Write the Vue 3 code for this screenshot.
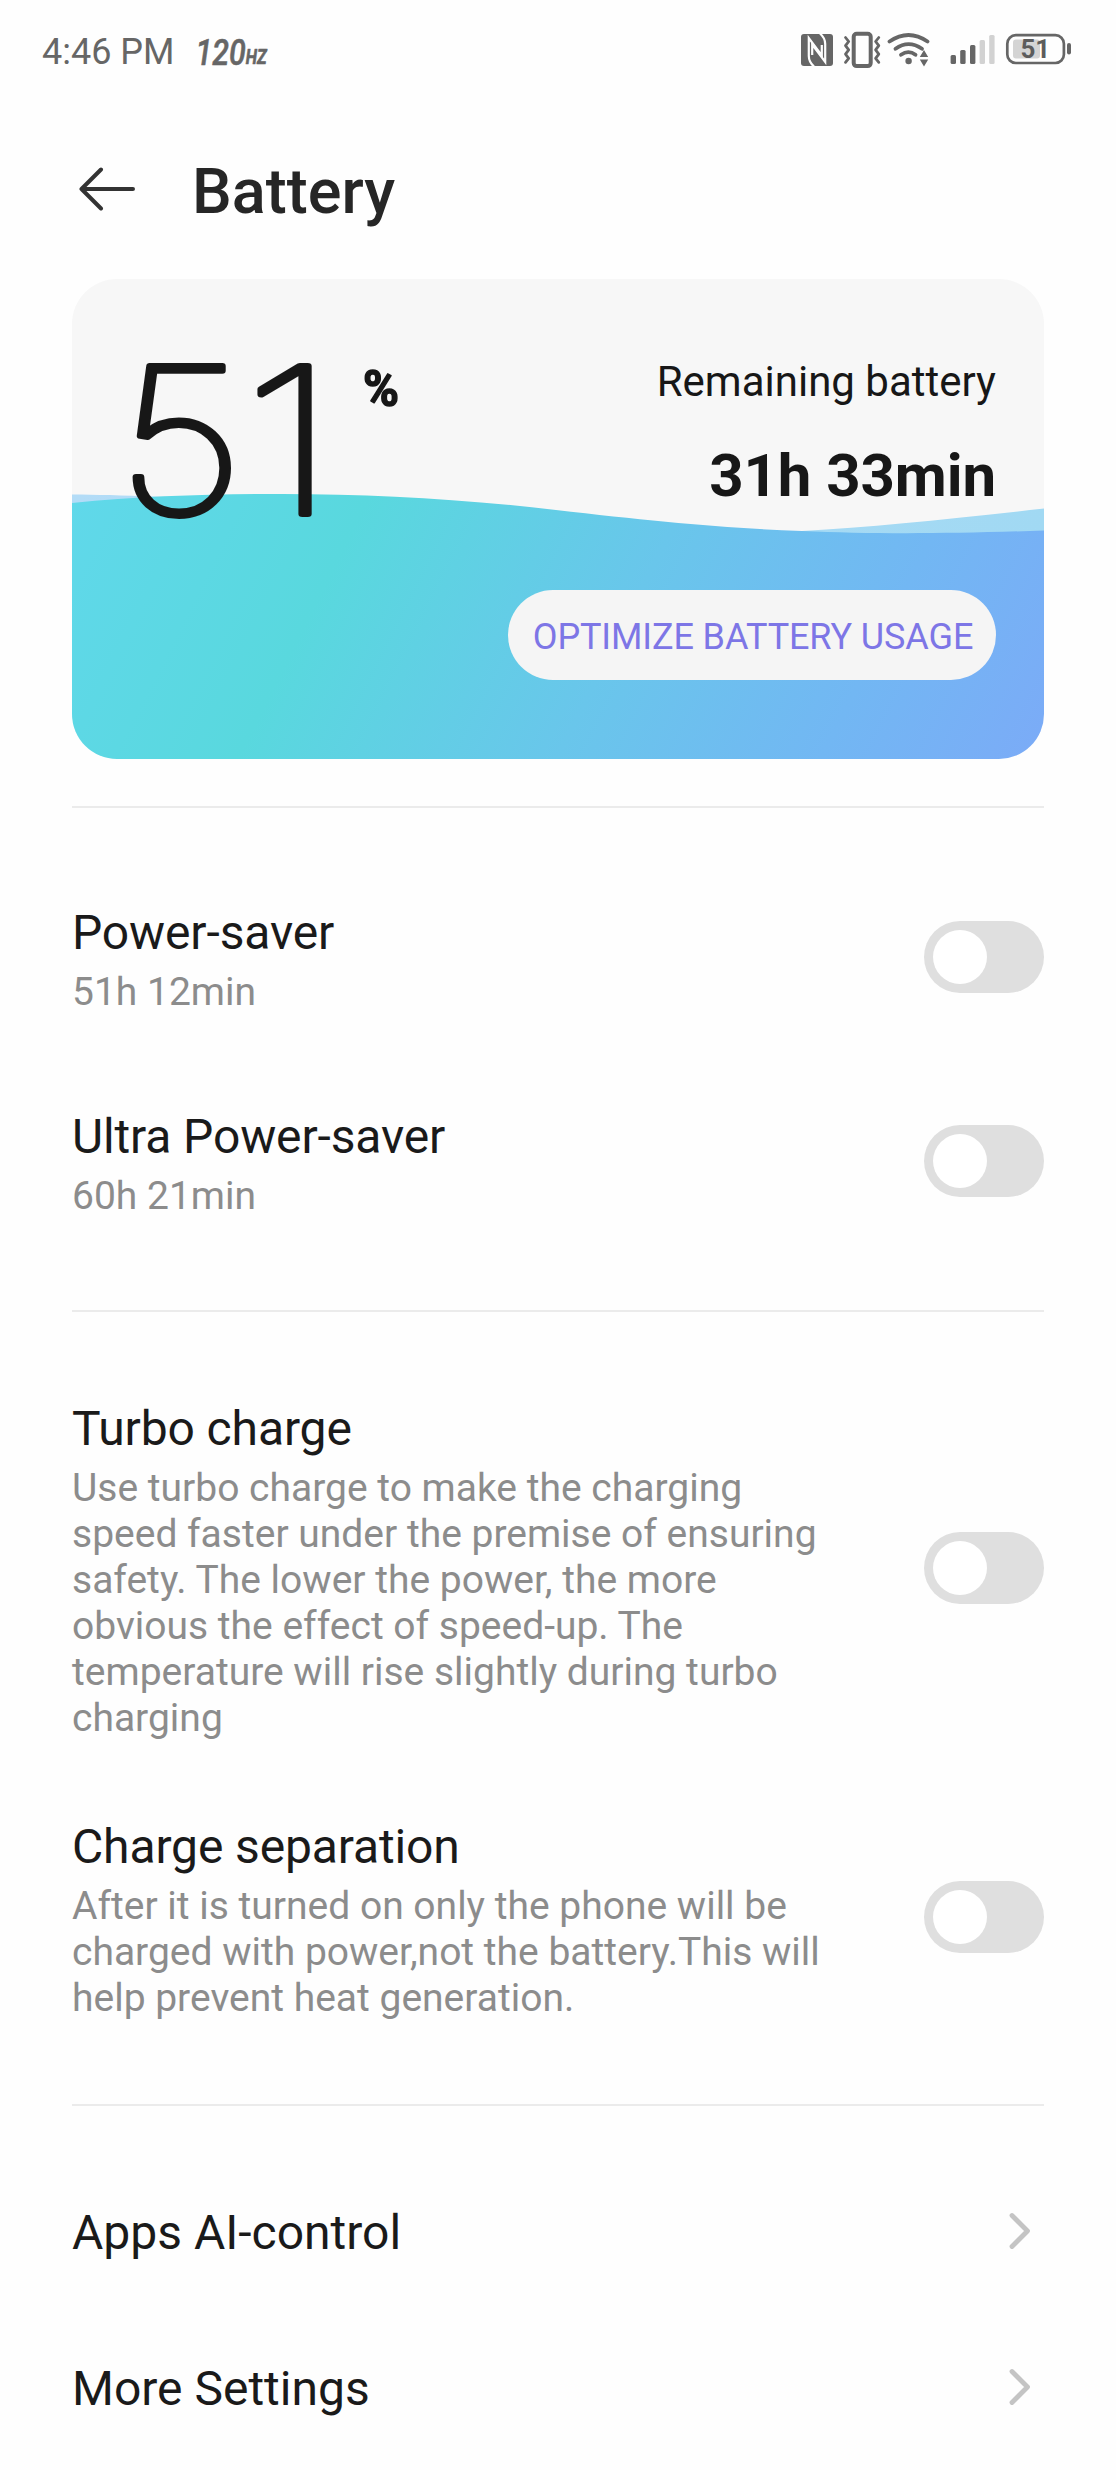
<template>
  <div class="screen">
    <div class="status-bar">
      <div class="status-left">
        <span class="time">4:46 PM</span>
        <svg class="refresh-rate" width="90" height="48" viewBox="0 0 90 48">
          <text class="rate" transform="translate(0.5 35.5) scale(0.82 1)">120<tspan class="rate-unit" dy="-0.5">HZ</tspan></text>
        </svg>
      </div>

      <svg class="status-icons" width="280" height="44" viewBox="798 28 280 44">
        <!-- nfc -->
        <rect x="801" y="34" width="32" height="32" rx="3" fill="#666" />
        <path d="M814 66.5 Q808.8 62 808.8 56 V38 L821.8 55.5 V45" class="nfc-line" />
        <path d="M820 33.5 Q825.2 38 825.2 44 V62 L812.2 44.5 V55" class="nfc-line" />

        <!-- vibrate -->
        <rect x="853.7" y="33.7" width="17" height="32.4" rx="3" class="line" stroke-width="4" />
        <path d="M845.5 37.5 l3.2 4 l-3.2 4.2 l3.2 4.2 l-3.2 4.2 l3.2 4.2 l-3.2 4" class="line" stroke-width="2.8" />
        <path d="M878.8 37.5 l-3.2 4 l3.2 4.2 l-3.2 4.2 l3.2 4.2 l-3.2 4.2 l3.2 4" class="line" stroke-width="2.8" />

        <!-- wifi -->
        <path d="M889.5 41.5 Q908.5 28.5 927.5 41.5" class="line" stroke-width="3.8" />
        <path d="M895.5 48.8 Q908.5 39.5 922 48.8" class="line" stroke-width="3.8" />
        <path d="M901 54.8 Q908.5 49.5 915.5 54.8" class="line" stroke-width="3.8" />
        <circle cx="908.6" cy="61" r="3.2" fill="#666" />
        <path d="M919.8 57 L924 50 L928.2 57 Z M919.8 59.5 L924 66.5 L928.2 59.5 Z" fill="#666" />

        <!-- signal -->
        <rect
          v-for="(bar, i) in signalBars" :key="i"
          :x="bar.x" :y="bar.top" width="5.4" :height="64 - bar.top" rx="1.5"
          :fill="bar.on ? '#666' : '#d2d2d2'"
        />

        <!-- battery -->
        <rect x="1013" y="39.5" width="27" height="19" rx="3" fill="#d4d4d4" />
        <rect x="1007.3" y="35.2" width="56.6" height="27.8" rx="8.5" class="line" stroke-width="2.7" />
        <rect x="1067" y="43" width="4" height="11.5" rx="2" fill="#666" />
        <text class="battery-num" x="1035.3" y="58.2" text-anchor="middle">{{ level }}</text>
      </svg>
    </div>

    <header class="header">
      <svg class="back" width="58" height="44" viewBox="0 0 58 44">
        <path d="M22 2.5 L2.5 22 L22 41.5 M2.5 22 H54" />
      </svg>
      <h1>Battery</h1>
    </header>

    <section class="card">
      <svg class="waves" width="972" height="480" viewBox="0 0 972 480">
        <defs>
          <linearGradient id="water" gradientUnits="userSpaceOnUse" x1="0" y1="215" x2="880" y2="657">
            <stop offset="0" stop-color="#60d8ea" />
            <stop offset="0.27" stop-color="#59d8de" />
            <stop offset="0.56" stop-color="#69c6eb" />
            <stop offset="0.8" stop-color="#72b7f3" />
            <stop offset="1" stop-color="#7babf7" />
          </linearGradient>
          <linearGradient id="backWater" x1="0" y1="0" x2="1" y2="0">
            <stop offset="0" stop-color="#b3dcf7" />
            <stop offset="1" stop-color="#a1d9f3" />
          </linearGradient>
        </defs>
        <path d="M0 215.5 C90 216 250 225 400 242 C520 256 640 256 730 252 C800 248 880 240 972 229.5 V300 H0 Z" fill="url(#backWater)" />
        <path d="M0 224 C70 217 140 215 210 215 C300 215 390 220 484 231 C580 242 650 249 730 252 C800 255 870 255 972 251.5 V480 H0 Z" fill="url(#water)" />
      </svg>

      <svg class="level" width="330" height="260" viewBox="0 0 330 260">
        <text class="digit" transform="translate(29 205) scale(1.11 1)">5</text>
        <text class="digit" transform="translate(155 205) scale(1.26 1)">1</text>
        <text class="percent" x="275" y="97" textLength="36" lengthAdjust="spacingAndGlyphs">%</text>
      </svg>

      <div class="remaining">
        <div class="remaining-label">Remaining battery</div>
        <div class="remaining-time">31h 33min</div>
        <button class="optimize">OPTIMIZE BATTERY USAGE</button>
      </div>
    </section>

    <section v-for="(group, i) in groups" :key="i" class="group">
      <div v-for="item in group" :key="item.title" class="row">
        <div class="row-text">
          <div class="row-title">{{ item.title }}</div>
          <div class="row-desc">{{ item.desc }}</div>
        </div>
        <button class="switch" :class="{ on: item.on }" @click="item.on = !item.on">
          <span class="knob"></span>
        </button>
      </div>
    </section>

    <section class="group links">
      <div v-for="link in links" :key="link" class="link">
        <span class="link-title">{{ link }}</span>
        <svg width="24" height="40" viewBox="0 0 24 40">
          <path d="M4 4.5 L19.5 20 L4 35.5" />
        </svg>
      </div>
    </section>
  </div>
</template>

<script setup>
import { ref } from 'vue';

const level = 51;

const signalBars = [
  { x: 950.6, top: 55, on: true },
  { x: 960.2, top: 50, on: true },
  { x: 970, top: 45, on: true },
  { x: 979.6, top: 40, on: false },
  { x: 989.2, top: 35, on: false }
];

const groups = ref([
  [
    { title: 'Power-saver', desc: '51h 12min', on: false },
    { title: 'Ultra Power-saver', desc: '60h 21min', on: false }
  ],
  [
    {
      title: 'Turbo charge',
      desc: 'Use turbo charge to make the charging speed faster under the premise of ensuring safety. The lower the power, the more obvious the effect of speed-up. The temperature will rise slightly during turbo charging',
      on: false
    },
    {
      title: 'Charge separation',
      desc: 'After it is turned on only the phone will be charged with power,not the battery.This will help prevent heat generation.',
      on: false
    }
  ]
]);

const links = ['Apps AI-control', 'More Settings'];
</script>

<style>
body {
  background-color: #fefefe;
}
</style>

<style scoped>
.screen {
  width: 1116px;
  height: 2480px;
  overflow: hidden;
  box-sizing: border-box;
  background-color: #fefefe;
  color: #1a1a1a;
  font-family: Roboto, "Liberation Sans", sans-serif;
}

.status-bar {
  display: flex;
  justify-content: space-between;
  align-items: flex-start;
  height: 100px;
  padding: 28px 38px 0 42px;
  box-sizing: border-box;
}

.status-left {
  display: flex;
  gap: 20px;
  padding-top: 3px;
}

.time {
  font-size: 36px;
  line-height: 42px;
  color: #666;
}

.refresh-rate {
  margin-top: -2px;
}

.rate {
  font-size: 37px;
  font-style: italic;
  font-weight: 500;
  fill: #666;
  stroke: #666;
  stroke-width: 0.6;
  stroke-linejoin: round;
}

.rate-unit {
  font-size: 20px;
  font-weight: 700;
}

.line {
  fill: none;
  stroke: #666;
  stroke-linecap: round;
  stroke-linejoin: round;
}

.nfc-line {
  fill: none;
  stroke: #fefefe;
  stroke-width: 2.2;
}

.battery-num {
  font-size: 26px;
  font-weight: 700;
  fill: #5c5c5c;
}

.header {
  display: flex;
  align-items: center;
  gap: 55px;
  height: 179px;
  padding: 0 79px;
  box-sizing: border-box;
}

.back {
  margin-bottom: 2px;
}

.back path {
  fill: none;
  stroke: #333;
  stroke-width: 4;
  stroke-linecap: round;
  stroke-linejoin: round;
}

h1 {
  margin: 4px 0 0;
  font-size: 63px;
  font-weight: 500;
  line-height: 74px;
  color: #262626;
}

.card {
  position: relative;
  display: flex;
  justify-content: space-between;
  height: 480px;
  margin: 0 72px 47px;
  border-radius: 45px;
  background-color: #f7f7f7;
  overflow: hidden;
}

.waves {
  position: absolute;
  left: 0;
  top: 0;
}

.level {
  position: relative;
  margin: 30px 0 0 16px;
}

.digit {
  font-family: Inter, Roboto, sans-serif;
  font-size: 203px;
  font-weight: 100;
  fill: #171717;
  stroke: #171717;
  stroke-width: 6;
  stroke-linejoin: round;
}

.percent {
  font-size: 50px;
  font-weight: 700;
  fill: #171717;
  stroke: #171717;
  stroke-width: 1.5;
  stroke-linejoin: round;
}

.remaining {
  position: relative;
  display: flex;
  flex-direction: column;
  align-items: flex-end;
  padding: 78px 48px 0 0;
  color: #171717;
}

.remaining-label {
  font-size: 42px;
  line-height: 50px;
}

.remaining-time {
  margin-top: 34px;
  font-size: 60px;
  font-weight: 700;
  line-height: 70px;
  letter-spacing: -0.1px;
}

.optimize {
  width: 488px;
  height: 90px;
  margin-top: 79px;
  padding: 3px 0 0 2px;
  border: none;
  border-radius: 45px;
  background-color: #f5f5f5;
  color: #7d76e6;
  font-family: inherit;
  font-size: 36px;
  letter-spacing: -0.12px;
  white-space: nowrap;
}

.group {
  margin: 0 72px;
  padding: 50px 0 44px;
  border-top: 2px solid #ebebeb;
}

.row {
  display: flex;
  justify-content: space-between;
  align-items: center;
  min-height: 204px;
  padding: 39px 0;
  box-sizing: border-box;
}

.row-text {
  width: 760px;
}

.row-title {
  font-size: 48px;
  line-height: 56px;
  letter-spacing: -0.13px;
}

.row-desc {
  margin-top: 8px;
  font-size: 39px;
  line-height: 46px;
  color: #8c8c8c;
}

.switch {
  width: 120px;
  height: 72px;
  margin-bottom: 6px;
  padding: 9px;
  border: none;
  border-radius: 36px;
  background-color: #dfdfdf;
  cursor: pointer;
}

.switch.on {
  background-color: #7d76e6;
}

.knob {
  display: block;
  width: 54px;
  height: 54px;
  border-radius: 50%;
  background-color: #fff;
}

.switch.on .knob {
  margin-left: auto;
}

.links {
  padding: 48px 0 0;
}

.link {
  display: flex;
  justify-content: space-between;
  align-items: center;
  height: 156px;
  padding-right: 12px;
}

.link-title {
  padding-top: 2px;
  font-size: 48px;
  line-height: 56px;
}

.link svg {
  margin-bottom: 2px;
}

.link path {
  fill: none;
  stroke: #c4c4c4;
  stroke-width: 4.8;
  stroke-linecap: round;
  stroke-linejoin: round;
}
</style>
